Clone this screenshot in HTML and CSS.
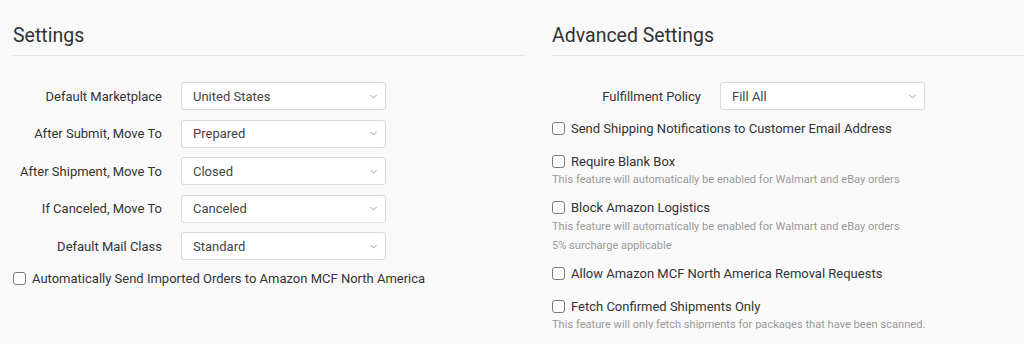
FILE: index.html
```html
<!DOCTYPE html>
<html lang="en">
<head>
    <meta charset="UTF-8">
    <title>Settings</title>
    <link rel="stylesheet" href="styles.css">
</head>
<body>
    <div class="page">
        <section class="panel">
            <h2>Settings</h2>

            <div class="rows">
                <div class="field">
                    <span class="field-label">Default Marketplace</span>
                    <div class="select">
                        <span>United States</span>
                        <svg width="7" height="5" viewBox="0 0 7 5"><path d="M0.5 1 L3.5 4 L6.5 1" /></svg>
                    </div>
                </div>
                <div class="field">
                    <span class="field-label">After Submit, Move To</span>
                    <div class="select">
                        <span>Prepared</span>
                        <svg width="7" height="5" viewBox="0 0 7 5"><path d="M0.5 1 L3.5 4 L6.5 1" /></svg>
                    </div>
                </div>
                <div class="field">
                    <span class="field-label">After Shipment, Move To</span>
                    <div class="select">
                        <span>Closed</span>
                        <svg width="7" height="5" viewBox="0 0 7 5"><path d="M0.5 1 L3.5 4 L6.5 1" /></svg>
                    </div>
                </div>
                <div class="field">
                    <span class="field-label">If Canceled, Move To</span>
                    <div class="select">
                        <span>Canceled</span>
                        <svg width="7" height="5" viewBox="0 0 7 5"><path d="M0.5 1 L3.5 4 L6.5 1" /></svg>
                    </div>
                </div>
                <div class="field">
                    <span class="field-label">Default Mail Class</span>
                    <div class="select">
                        <span>Standard</span>
                        <svg width="7" height="5" viewBox="0 0 7 5"><path d="M0.5 1 L3.5 4 L6.5 1" /></svg>
                    </div>
                </div>
            </div>

            <div class="checks checks-left">
                <div class="group">
                    <label class="check"><input type="checkbox"> Automatically Send Imported Orders to Amazon MCF North America</label>
                </div>
            </div>
        </section>

        <section class="panel panel-right">
            <h2>Advanced Settings</h2>

            <div class="rows">
                <div class="field">
                    <span class="field-label">Fulfillment Policy</span>
                    <div class="select">
                        <span>Fill All</span>
                        <svg width="7" height="5" viewBox="0 0 7 5"><path d="M0.5 1 L3.5 4 L6.5 1" /></svg>
                    </div>
                </div>
            </div>

            <div class="checks">
                <div class="group">
                    <label class="check"><input type="checkbox"> Send Shipping Notifications to Customer Email Address</label>
                </div>
                <div class="group">
                    <label class="check"><input type="checkbox"> Require Blank Box</label>
                    <p class="help">This feature will automatically be enabled for Walmart and eBay orders</p>
                </div>
                <div class="group">
                    <label class="check"><input type="checkbox"> Block Amazon Logistics</label>
                    <p class="help">This feature will automatically be enabled for Walmart and eBay orders</p>
                    <p class="help">5% surcharge applicable</p>
                </div>
                <div class="group">
                    <label class="check"><input type="checkbox"> Allow Amazon MCF North America Removal Requests</label>
                </div>
                <div class="group">
                    <label class="check"><input type="checkbox"> Fetch Confirmed Shipments Only</label>
                    <p class="help">This feature will only fetch shipments for packages that have been scanned.</p>
                </div>
            </div>
        </section>
    </div>
</body>
</html>
```

FILE: styles.css
```css
body
{
    margin: 0;
    background-color: #f9f9f9;
    color: #333;
    font-family: Roboto, "Liberation Sans", sans-serif;
    font-size: 13px;
    overflow: hidden;
}

.page
{
    display: flex;
    gap: 27px;
    padding: 0 0 0 13px;
}

.panel
{
    width: 512px;
    flex-shrink: 0;
}

h2
{
    margin: 0;
    padding-top: 25px;
    height: 30px;
    font-size: 19.5px;
    font-weight: 400;
    line-height: 22px;
    color: #333;
    border-bottom: 1px solid #e4e4e4;
}

.rows
{
    display: flex;
    flex-direction: column;
    gap: 9.5px;
    margin-top: 26px;
}

.field
{
    display: flex;
    align-items: center;
    gap: 19px;
}

.field-label
{
    width: 149px;
    text-align: right;
    color: #333;
}

.select
{
    width: 205px;
    height: 28px;
    box-sizing: border-box;
    display: flex;
    align-items: center;
    justify-content: space-between;
    padding: 0 8px 0 11px;
    background-color: #fff;
    border: 1px solid #d9d9d9;
    border-radius: 3px;
    color: #444;
}

.select svg
{
    fill: none;
    stroke: #999;
    stroke-width: 1;
}

.checks
{
    display: flex;
    flex-direction: column;
    gap: 15px;
    margin-top: 9px;
}

.checks-left
{
    margin-top: 9px;
}

.check
{
    display: flex;
    align-items: center;
    gap: 6px;
    height: 18px;
    color: #333;
}

.check input
{
    appearance: none;
    margin: 0;
    width: 13px;
    height: 13px;
    border: 1px solid #7a7a7a;
    border-radius: 3px;
    background-color: #fff;
}

.help
{
    margin: 1px 0 0;
    line-height: 18px;
    font-size: 11.1px;
    color: #9a9a9a;
}

.help:last-child
{
    margin-bottom: -5.5px;
}
```
